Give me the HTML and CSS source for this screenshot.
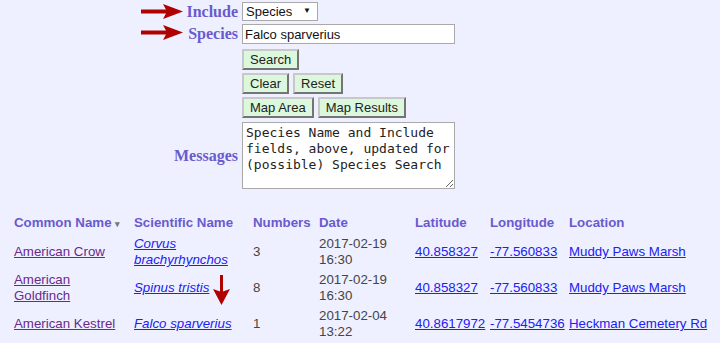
FILE: index.html
```html
<!DOCTYPE html>
<html lang="en">
<head>
    <meta charset="UTF-8">
    <title>Species Search</title>
    <link rel="stylesheet" href="styles.css">
</head>
<body>

    <div class="buscador">
        <div class="fila f-include">
            <label class="etiqueta" for="include">Include</label>
            <div class="selector-caja">
                <select id="include" class="selector"><option>Species</option></select>
            </div>
        </div>
        <div class="fila f-species">
            <label class="etiqueta" for="species">Species</label>
            <input type="text" id="species" class="campo" value="Falco sparverius">
        </div>
        <div class="fila">
            <span></span>
            <div class="botones"><button class="boton">Search</button></div>
        </div>
        <div class="fila">
            <span></span>
            <div class="botones"><button class="boton">Clear</button><button class="boton">Reset</button></div>
        </div>
        <div class="fila f-mapa">
            <span></span>
            <div class="botones"><button class="boton">Map Area</button><button class="boton">Map Results</button></div>
        </div>
        <div class="fila centro">
            <label class="etiqueta" for="messages">Messages</label>
            <textarea id="messages" class="mensajes">Species Name and Include fields, above, updated for (possible) Species Search</textarea>
        </div>

        <!-- flechas -->
        <svg class="flecha f1" width="42" height="15" viewBox="0 0 42 15"><path d="M0 7.5H27" stroke="#b00000" stroke-width="4"/><path d="M22 0L42 7.5L22 15L26 7.5Z" fill="#b00000"/></svg>
        <svg class="flecha f2" width="42" height="15" viewBox="0 0 42 15"><path d="M0 7.5H27" stroke="#b00000" stroke-width="4"/><path d="M22 0L42 7.5L22 15L26 7.5Z" fill="#b00000"/></svg>
    </div>

    <div class="resultados">
        <table class="tabla">
            <tr>
                <th class="c-comun">Common Name <span class="orden">&#9662;</span></th>
                <th class="c-cientifico">Scientific Name</th>
                <th class="c-numero">Numbers</th>
                <th class="c-fecha">Date</th>
                <th class="c-lat">Latitude</th>
                <th class="c-lon">Longitude</th>
                <th class="c-lugar">Location</th>
            </tr>
            <tr>
                <td><a class="visto" href="#">American Crow</a></td>
                <td><a class="cientifico" href="#">Corvus brachyrhynchos</a></td>
                <td>3</td>
                <td>2017-02-19 16:30</td>
                <td><a href="#">40.858327</a></td>
                <td><a href="#">-77.560833</a></td>
                <td><a href="#">Muddy Paws Marsh</a></td>
            </tr>
            <tr>
                <td><a class="visto" href="#">American Goldfinch</a></td>
                <td><a class="cientifico" href="#">Spinus tristis</a></td>
                <td>8</td>
                <td>2017-02-19 16:30</td>
                <td><a href="#">40.858327</a></td>
                <td><a href="#">-77.560833</a></td>
                <td><a href="#">Muddy Paws Marsh</a></td>
            </tr>
            <tr>
                <td><a class="visto" href="#">American Kestrel</a></td>
                <td><a class="cientifico" href="#">Falco sparverius</a></td>
                <td>1</td>
                <td>2017-02-04 13:22</td>
                <td><a href="#">40.8617972</a></td>
                <td><a href="#">-77.5454736</a></td>
                <td><a href="#">Heckman Cemetery Rd</a></td>
            </tr>
        </table>
        <svg class="flecha f3" width="17" height="30" viewBox="0 0 17 30"><path d="M8.5 0V18" stroke="#b00000" stroke-width="3"/><path d="M0 14L8.5 30L17 14L8.5 17Z" fill="#b00000"/></svg>
    </div>

</body>
</html>
```

FILE: styles.css
```css
body {
    margin: 0;
    background-color: #eef0ff;
    font-family: "Liberation Sans", Arial, sans-serif;
    font-size: 13px;
    color: #333;
}

.buscador {
    position: relative;
    padding-top: 2px;
}

.fila {
    display: grid;
    grid-template-columns: 238px auto;
    column-gap: 4px;
    align-items: start;
    margin-bottom: 3px;
}

.f-species {
    margin-bottom: 5px;
}

.f-mapa {
    margin-bottom: 4px;
}

.fila.centro {
    align-items: center;
    margin-bottom: 0;
}

.etiqueta {
    text-align: right;
    font-family: "Liberation Serif", "Times New Roman", serif;
    font-weight: bold;
    font-size: 16px;
    color: #6a5acd;
    line-height: 19px;
}

.selector-caja {
    position: relative;
    width: 76px;
    height: 19px;
}

.selector-caja::after {
    content: "\25BC";
    position: absolute;
    right: 7px;
    top: 4px;
    font-size: 8px;
    color: #111;
    pointer-events: none;
}

.selector {
    appearance: none;
    -webkit-appearance: none;
    display: block;
    width: 76px;
    height: 19px;
    box-sizing: border-box;
    font-family: "Liberation Sans", Arial, sans-serif;
    font-size: 13px;
    color: #111;
    background: #fff;
    border: 1px solid #a9a9a9;
    border-radius: 0;
    padding: 0 3px;
    margin: 0;
}

.campo {
    display: block;
    width: 213px;
    height: 20px;
    box-sizing: border-box;
    font-family: "Liberation Sans", Arial, sans-serif;
    font-size: 13px;
    color: #111;
    border: 1px solid #a9a9a9;
    padding: 1px 2px;
    margin: 0;
}

.botones {
    display: flex;
    gap: 4px;
}

.boton {
    height: 21px;
    padding: 0 6px;
    background-color: #dcf8dc;
    border: 2px outset #c8c8c8;
    font-family: "Liberation Sans", Arial, sans-serif;
    font-size: 13px;
    color: #222;
}

.mensajes {
    display: block;
    width: 213px;
    height: 67px;
    box-sizing: border-box;
    margin: 0;
    padding: 2px 3px;
    font-family: "DejaVu Sans Mono", monospace;
    font-size: 13px;
    line-height: 16px;
    color: #222;
    border: 1px solid #a9a9a9;
    resize: both;
}

.flecha {
    position: absolute;
}

.f1 {
    left: 141px;
    top: 4px;
}

.f2 {
    left: 141px;
    top: 25px;
}

.resultados {
    position: relative;
    padding: 23px 10px 0;
}

.tabla {
    table-layout: fixed;
    width: 705px;
    border-collapse: collapse;
    font-size: 13.3px;
}

.tabla th {
    text-align: left;
    color: #6a5acd;
    padding: 2px 4px 4px;
    height: 16px;
}

.c-comun { width: 112px; }
.c-cientifico { width: 111px; }
.c-numero { width: 58px; }
.c-fecha { width: 88px; }
.c-lat { width: 67px; }
.c-lon { width: 71px; }
.c-lugar { width: 142px; }

.tabla td {
    padding: 1px 4px;
    height: 34px;
    line-height: 16px;
    vertical-align: middle;
    color: #444;
}

.tabla a {
    color: #2020f0;
}

.tabla a.visto {
    color: #6a2a8a;
}

.tabla a.cientifico {
    font-style: italic;
}

.orden {
    font-size: 9px;
    color: #777;
}

.f3 {
    left: 213px;
    top: 86px;
}
```
